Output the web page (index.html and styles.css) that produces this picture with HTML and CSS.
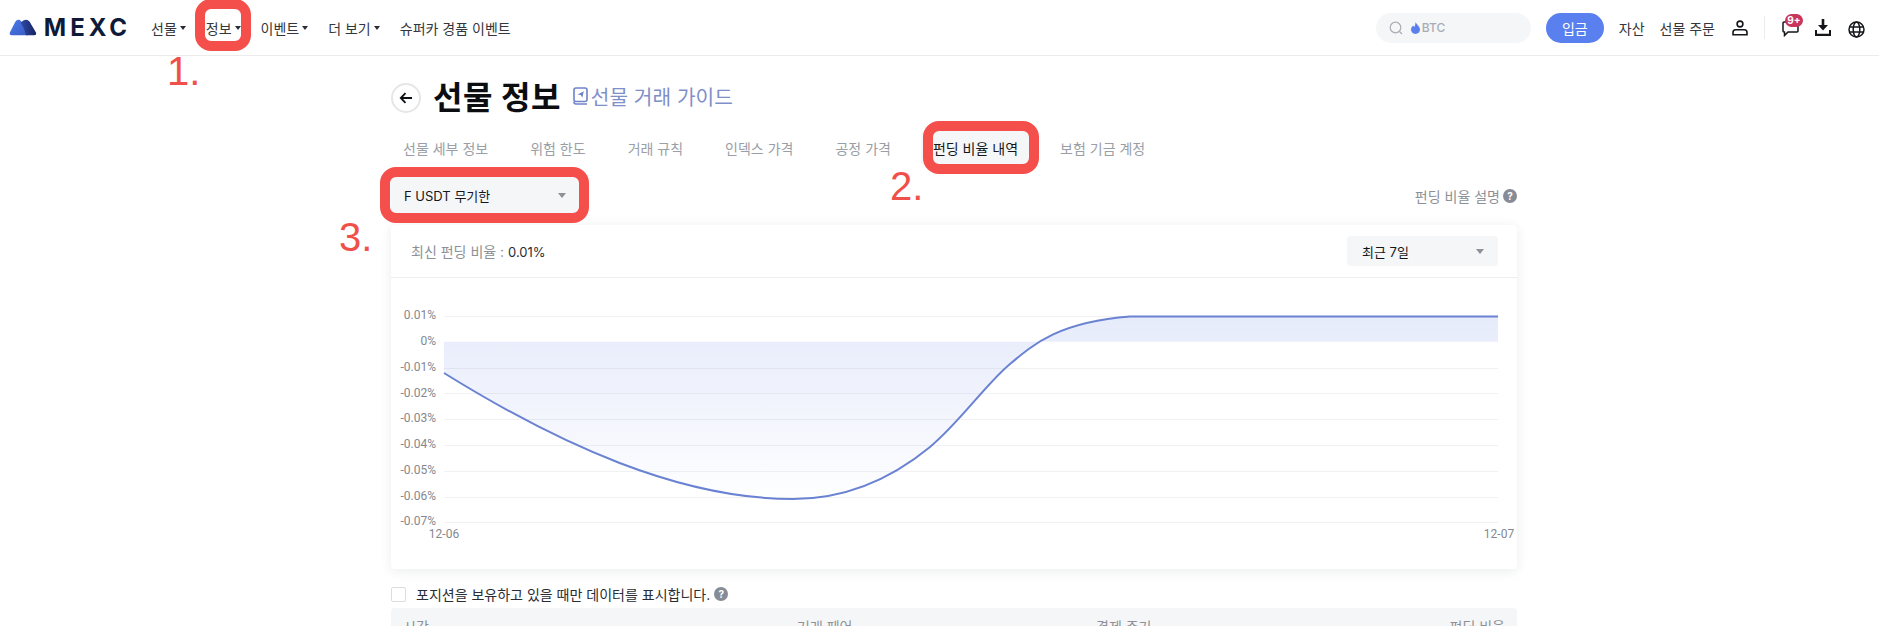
FILE: index.html
```html
<!DOCTYPE html>
<html lang="ko">
<head>
    <meta charset="UTF-8">
    <title>MEXC - 선물 정보</title>
    <link rel="stylesheet" href="styles.css">
</head>
<body>
    <header class="topbar">
        <a class="logo" href="#">
            <svg width="31" height="19" viewBox="0 0 31 19">
                <defs>
                    <linearGradient id="peakLeft" x1="0" y1="0" x2="1" y2="1">
                        <stop offset="0" stop-color="#4a7bea"/>
                        <stop offset="1" stop-color="#3a5bc4"/>
                    </linearGradient>
                    <linearGradient id="peakRight" x1="0" y1="0" x2="1" y2="0">
                        <stop offset="0" stop-color="#2f4aa8"/>
                        <stop offset="1" stop-color="#16235f"/>
                    </linearGradient>
                </defs>
                <path d="M1 15 L7 3 Q9 0 11.500 1 Q13.500 2 15 5 L21 18 L3 18 Q0 18 1 15 Z" fill="url(#peakLeft)"/>
                <path d="M13 4 L16 1.800 Q20 -0.500 23 3 L30 15 Q31 18 28 18 L19 18 Q17 10 13 4 Z" fill="url(#peakRight)"/>
            </svg>
            <span class="logo-text">MEXC</span>
        </a>
        <nav class="main-nav">
            <a class="nav-item" href="#">선물<i class="nav-caret"></i></a>
            <a class="nav-item" href="#">정보<i class="nav-caret"></i></a>
            <a class="nav-item" href="#">이벤트<i class="nav-caret"></i></a>
            <a class="nav-item" href="#">더 보기<i class="nav-caret"></i></a>
            <a class="nav-item" href="#">슈퍼카 경품 이벤트</a>
        </nav>
        <div class="top-right">
            <div class="search">
                <svg width="14" height="14" viewBox="0 0 14 14" fill="none" stroke="#a9adb3" stroke-width="1.200">
                    <circle cx="6.500" cy="6.500" r="5.300"/>
                    <path d="M10.500 10.500 L13 13"/>
                </svg>
                <svg class="flame" width="9" height="12" viewBox="0 0 9 12">
                    <path d="M4.800 0 C5.200 2.500 9 4 9 7.600 C9 10.200 7 12 4.500 12 C2 12 0 10.200 0 7.600 C0 5.600 1.200 4.500 2.200 3.500 C2.500 4.400 3 4.800 3.500 4.800 C4.200 3.500 4.200 1.500 4.800 0 Z" fill="#5b80ee"/>
                </svg>
                <span class="search-text">BTC</span>
            </div>
            <button class="deposit">입금</button>
            <a class="top-link" href="#">자산</a>
            <a class="top-link" href="#">선물 주문</a>
            <svg class="user-icon" width="16" height="16" viewBox="0 0 16 16" fill="none" stroke="#14161a" stroke-width="1.600">
                <circle cx="8" cy="4" r="2.900"/>
                <path d="M3.500 9.800 H12.500 Q15 9.800 15 12.500 V14.800 H1 V12.500 Q1 9.800 3.500 9.800 Z"/>
            </svg>
            <span class="top-divider"></span>
            <div class="chat">
                <svg width="17" height="16" viewBox="0 0 17 16" fill="none" stroke="#14161a" stroke-width="1.500">
                    <path d="M2 1 H15 Q16 1 16 2 V10 Q16 11 15 11 H6 L2.500 14.500 V11 H2 Q1 11 1 10 V2 Q1 1 2 1 Z"/>
                </svg>
                <span class="chat-badge">9+</span>
            </div>
            <svg class="download" width="16" height="17" viewBox="0 0 16 17" fill="#14161a">
                <path d="M6.700 0 H9.300 V6 H13 L8 11.500 L3 6 H6.700 Z"/>
                <path d="M0 11 H2 V14.800 H14 V11 H16 V17 H0 Z"/>
            </svg>
            <svg class="globe" width="17" height="17" viewBox="0 0 17 17" fill="none" stroke="#14161a" stroke-width="1.500">
                <circle cx="8.500" cy="8.500" r="7.500"/>
                <ellipse cx="8.500" cy="8.500" rx="3.300" ry="7.500"/>
                <path d="M1 6 H16 M1 11 H16"/>
            </svg>
        </div>
    </header>

    <main class="content">
        <div class="title-row">
            <button class="back-btn">
                <svg width="14" height="12" viewBox="0 0 14 12" fill="none" stroke="#0e1014" stroke-width="1.800">
                    <path d="M13 6 H2 M6.500 1.200 L1.800 6 L6.500 10.800"/>
                </svg>
            </button>
            <h1 class="page-title">선물 정보</h1>
            <a class="guide-link" href="#">
                <svg width="15" height="18" viewBox="0 0 15 18" fill="none" stroke="#6f83c9" stroke-width="1.600">
                    <rect x="1" y="1" width="13" height="13.500" rx="2"/>
                    <path d="M1 14.500 V15 Q1 17 3 17 H14"/>
                    <path d="M4.500 7.500 L10.800 4.300 L9.300 10.800 L7.800 8 Z" fill="#6f83c9" stroke="none"/>
                </svg>
                <span>선물 거래 가이드</span>
            </a>
        </div>

        <div class="tabs">
            <a class="tab" href="#">선물 세부 정보</a>
            <a class="tab" href="#">위험 한도</a>
            <a class="tab" href="#">거래 규칙</a>
            <a class="tab" href="#">인덱스 가격</a>
            <a class="tab" href="#">공정 가격</a>
            <a class="tab tab-active" href="#">펀딩 비율 내역</a>
            <a class="tab" href="#">보험 기금 계정</a>
        </div>

        <div class="filter-row">
            <div class="select select-contract">
                <span>F USDT 무기한</span>
                <i class="select-caret"></i>
            </div>
            <a class="explain" href="#">펀딩 비율 설명<span class="help">?</span></a>
        </div>

        <section class="card">
            <div class="card-head">
                <div class="latest">최신 펀딩 비율 : <span class="latest-value">0.01%</span></div>
                <div class="select select-range">
                    <span>최근 7일</span>
                    <i class="select-caret"></i>
                </div>
            </div>
            <svg class="chart" width="1126" height="291" viewBox="391 278 1126 291">
                <defs>
                    <linearGradient id="areaFill" gradientUnits="userSpaceOnUse" x1="0" y1="316" x2="0" y2="505">
                        <stop offset="0" stop-color="#e6ebfb"/>
                        <stop offset="1" stop-color="#ffffff"/>
                    </linearGradient>
                </defs>
                <path fill="url(#areaFill)" d="M444 373 C560 445 680 499 793 499 C840 499 885 484 930 447 C960 422 985 385 1010 364 C1035 343 1060 322 1130 316.500 L1498 316.500 L1498 341.700 L444 341.700 Z"/>
                <g class="grid">
                    <path d="M444 316.500 H1498"/>
                    <path d="M444 368.500 H1498"/>
                    <path d="M444 393.500 H1498"/>
                    <path d="M444 419.500 H1498"/>
                    <path d="M444 445.500 H1498"/>
                    <path d="M444 471.500 H1498"/>
                    <path d="M444 497.500 H1498"/>
                    <path d="M444 522.500 H1498"/>
                </g>
                <path class="line" d="M444 373 C560 445 680 499 793 499 C840 499 885 484 930 447 C960 422 985 385 1010 364 C1035 343 1060 322 1130 316.500 L1498 316.500"/>
                <g class="y-labels">
                    <text x="436" y="319">0.01%</text>
                    <text x="436" y="345">0%</text>
                    <text x="436" y="371">-0.01%</text>
                    <text x="436" y="397">-0.02%</text>
                    <text x="436" y="422">-0.03%</text>
                    <text x="436" y="448">-0.04%</text>
                    <text x="436" y="474">-0.05%</text>
                    <text x="436" y="500">-0.06%</text>
                    <text x="436" y="525">-0.07%</text>
                </g>
                <g class="x-labels">
                    <text x="444" y="538">12-06</text>
                    <text x="1499" y="538">12-07</text>
                </g>
            </svg>
        </section>

        <label class="position-filter">
            <span class="checkbox"></span>
            <span>포지션을 보유하고 있을 때만 데이터를 표시합니다.</span>
            <span class="help">?</span>
        </label>

        <div class="table-head">
            <span>시간</span>
            <span>거래 페어</span>
            <span>결제 주기</span>
            <span class="col-rate">펀딩 비율</span>
        </div>
    </main>

    <!-- annotations drawn on top of the screenshot -->
    <div class="ring ring-info"></div>
    <div class="ring ring-tab"></div>
    <div class="ring ring-select"></div>
    <span class="step step-1">1.</span>
    <span class="step step-2">2.</span>
    <span class="step step-3">3.</span>
</body>
</html>
```

FILE: styles.css
```css
html, body {
    height: 626px;
    overflow: hidden;
}

body {
    position: relative;
    margin: 0;
    background: #fff;
    color: #14161a;
    font-family: Inter, "Noto Sans CJK KR", sans-serif;
}

a {
    color: inherit;
    text-decoration: none;
}

.topbar {
    display: flex;
    align-items: center;
    height: 55px;
    padding: 0 14px 0 9px;
    border-bottom: 1px solid #ececec;
}

.logo {
    display: flex;
    align-items: center;
    gap: 7px;
    width: 122px;
}

.logo-text {
    font-family: Inter, sans-serif;
    font-size: 24px;
    font-weight: 700;
    letter-spacing: 4px;
    color: #0f1a38;
}

.main-nav {
    display: flex;
    align-items: center;
    gap: 20px;
    margin-left: 20px;
}

.nav-item {
    display: flex;
    align-items: center;
    font-size: 14px;
    color: #33363c;
}

.nav-caret {
    width: 0;
    height: 0;
    margin-left: 3px;
    border-left: 3px solid transparent;
    border-right: 3px solid transparent;
    border-top: 4px solid #2a2d33;
}

.top-right {
    display: flex;
    align-items: center;
    margin-left: auto;
}

.search {
    display: flex;
    align-items: center;
    width: 155px;
    height: 30px;
    padding-left: 13px;
    box-sizing: border-box;
    border-radius: 15px;
    background: #f5f6f8;
}

.flame {
    margin-left: 8px;
}

.search-text {
    margin-left: 2px;
    font-size: 12px;
    font-weight: 500;
    color: #a9adb3;
}

.deposit {
    width: 58px;
    height: 30px;
    margin-left: 15px;
    border: none;
    border-radius: 15px;
    background: #5a7fee;
    color: #fff;
    font-family: inherit;
    font-size: 14px;
}

.top-link {
    margin-left: 15px;
    font-size: 14px;
    color: #33363c;
}

.user-icon {
    margin-left: 17px;
}

.top-divider {
    width: 1px;
    height: 23px;
    margin-left: 16px;
    background: #ececec;
}

.chat {
    position: relative;
    height: 16px;
    margin-left: 17px;
    padding-top: 3px;
}

.chat-badge {
    position: absolute;
    top: -4px;
    left: 3px;
    width: 18px;
    height: 13px;
    border-radius: 7px;
    background: #c8365c;
    color: #fff;
    font-size: 10px;
    font-weight: 700;
    line-height: 13px;
    text-align: center;
}

.download {
    margin-left: 16px;
}

.globe {
    margin-left: 17px;
    margin-top: 3px;
}

.content {
    padding: 27px 362px 0 391px;
}

.title-row {
    display: flex;
    align-items: center;
    height: 30px;
}

.back-btn {
    display: flex;
    align-items: center;
    justify-content: center;
    width: 30px;
    height: 30px;
    padding: 0;
    border: 2px solid #e6e6e6;
    border-radius: 50%;
    background: #fff;
}

.page-title {
    margin: 0 0 0 12px;
    font-size: 32px;
    font-weight: 700;
    letter-spacing: 0.5px;
    line-height: 30px;
    color: #0b0d11;
}

.guide-link {
    display: flex;
    align-items: center;
    gap: 3px;
    margin: 0 0 5px 12px;
    font-size: 20.300px;
    color: #7f90c9;
}

.tabs {
    display: flex;
    gap: 18px;
    margin-top: 18px;
}

.tab {
    height: 34px;
    padding: 0 12px;
    border-radius: 4px;
    font-size: 14px;
    line-height: 36px;
    color: #9a9ea6;
}

.tab-active {
    background: #f5f6f8;
    color: #14161a;
}

.filter-row {
    display: flex;
    align-items: center;
    justify-content: space-between;
    margin-top: 12px;
}

.select {
    display: flex;
    align-items: center;
    justify-content: space-between;
    box-sizing: border-box;
    border-radius: 4px;
    background: #f5f6f8;
    font-size: 13px;
    color: #14161a;
}

.select-contract {
    width: 188px;
    height: 37px;
    padding: 0 13px;
}

.select-range {
    width: 151px;
    height: 30px;
    padding: 0 14px 0 15px;
}

.select-caret {
    width: 0;
    height: 0;
    border-left: 4px solid transparent;
    border-right: 4px solid transparent;
    border-top: 5px solid #8d9096;
}

.explain {
    display: flex;
    align-items: center;
    gap: 3px;
    font-size: 14px;
    color: #8d9096;
}

.help {
    display: inline-block;
    width: 14px;
    height: 14px;
    border-radius: 50%;
    background: #878b95;
    color: #fff;
    font-size: 10px;
    font-weight: 700;
    line-height: 14px;
    text-align: center;
}

.card {
    height: 344px;
    margin-top: 11px;
    border-radius: 4px;
    background: #fff;
    box-shadow: 0 2px 12px rgba(30, 40, 60, 0.09);
}

.card-head {
    display: flex;
    align-items: center;
    justify-content: space-between;
    box-sizing: border-box;
    height: 53px;
    padding: 0 19px 0 20px;
    border-bottom: 1px solid #eeeeee;
}

.latest {
    font-size: 14px;
    color: #8d9096;
}

.latest-value {
    font-size: 13px;
    color: #2a2d33;
}

.chart {
    display: block;
}

.grid path {
    stroke: rgba(50, 60, 90, 0.07);
    stroke-width: 1;
}

.line {
    fill: none;
    stroke: #6a82d2;
    stroke-width: 2;
}

.y-labels text {
    fill: #85888e;
    font-family: Roboto, sans-serif;
    font-size: 12px;
    text-anchor: end;
}

.x-labels text {
    fill: #85888e;
    font-family: Roboto, sans-serif;
    font-size: 12px;
    text-anchor: middle;
}

.position-filter {
    display: flex;
    align-items: center;
    height: 16px;
    margin-top: 17px;
    font-size: 14px;
    color: #2a2d33;
}

.checkbox {
    box-sizing: border-box;
    width: 15px;
    height: 15px;
    margin-right: 10px;
    border: 1px solid #dcdde0;
    border-radius: 2px;
}

.position-filter .help {
    margin-left: 4px;
}

.table-head {
    display: grid;
    grid-template-columns: 394px 299px 1fr auto;
    align-items: center;
    height: 36px;
    margin-top: 6px;
    padding: 0 12px;
    border-radius: 4px;
    background: #f5f6f8;
    font-size: 14px;
    color: #8d9096;
}

.ring {
    position: absolute;
    box-sizing: border-box;
    border: 10px solid #f44f4a;
    border-radius: 16px;
}

.ring-info {
    left: 195px;
    top: -1px;
    width: 56px;
    height: 52px;
}

.ring-tab {
    left: 923px;
    top: 121px;
    width: 116px;
    height: 53px;
}

.ring-select {
    left: 380px;
    top: 167px;
    width: 209px;
    height: 56px;
}

.step {
    position: absolute;
    font-family: "Liberation Sans", sans-serif;
    font-size: 40px;
    line-height: 40px;
    color: #f0504a;
}

.step-1 {
    left: 167px;
    top: 51px;
}

.step-2 {
    left: 890px;
    top: 166px;
}

.step-3 {
    left: 339px;
    top: 217px;
}
```
